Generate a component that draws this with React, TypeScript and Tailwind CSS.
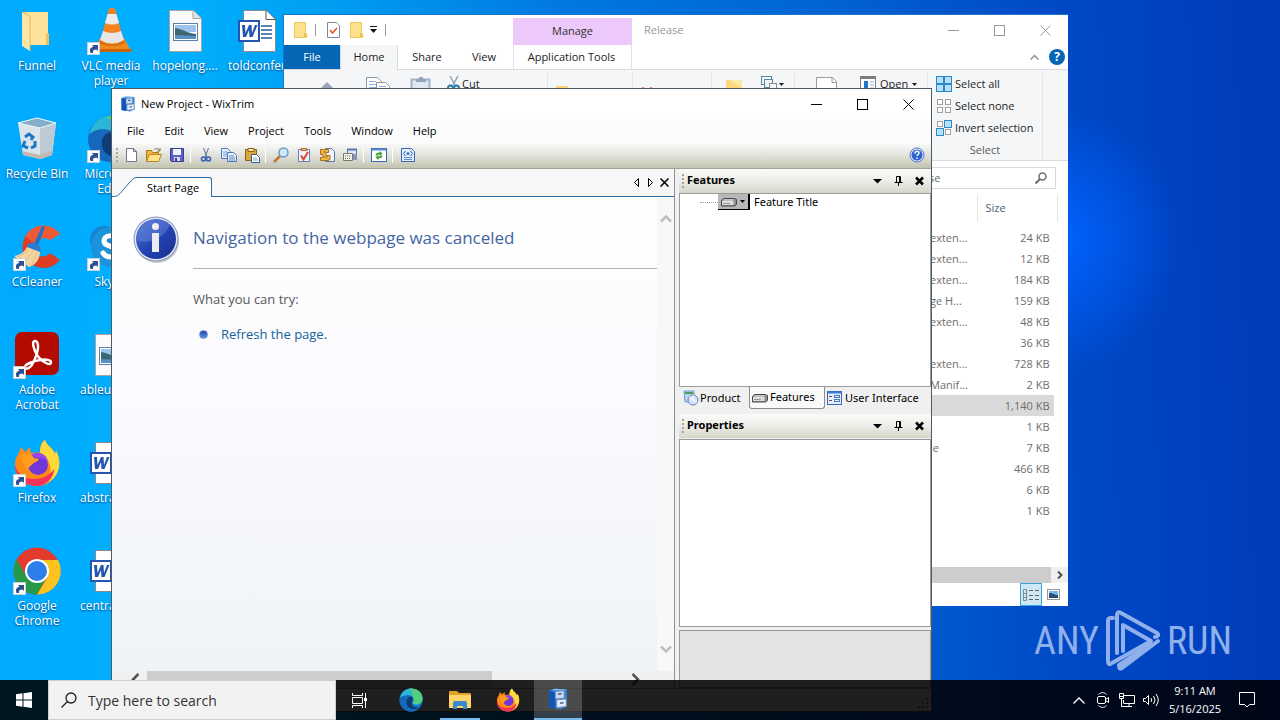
import type { ReactNode } from "react";

interface FileRow {
  type: string;
  size: string;
  selected?: boolean;
}

const files: FileRow[] = [
  { type: "exten...", size: "24 KB" },
  { type: "exten...", size: "12 KB" },
  { type: "exten...", size: "184 KB" },
  { type: "ge H...", size: "159 KB" },
  { type: "exten...", size: "48 KB" },
  { type: "", size: "36 KB" },
  { type: "exten...", size: "728 KB" },
  { type: "Manif...", size: "2 KB" },
  { type: "", size: "1,140 KB", selected: true },
  { type: "", size: "1 KB" },
  { type: "le", size: "7 KB" },
  { type: "", size: "466 KB" },
  { type: "", size: "6 KB" },
  { type: "", size: "1 KB" },
];

const menus = ["File", "Edit", "View", "Project", "Tools", "Window", "Help"];

/* ---------- desktop icons ---------- */

function Shortcut() {
  return (
    <g>
      <rect x="0.5" y="35.5" width="12" height="12" fill="#fff" stroke="#c8d0d8" />
      <path d="M3.500 46c-1.500-4 .5-6 3-6L5 38h6v6l-1.500-1.500C7 42.500 5.500 43.500 6 46z" fill="#2f4f8f" />
    </g>
  );
}

function FolderBig() {
  return (
    <svg className="size-12" viewBox="0 0 48 48">
      <path d="M9 5h26v21l1 1v11H13z" fill="#fbd97c" />
      <path d="M14 5h21v33H14z" fill="#fde299" />
      <path d="M33 26l3 1v11h-3z" fill="#f0c050" />
      <path d="M9 5l8 4v35l-8-5z" fill="#f9e6a8" />
      <path d="M9 5l8 4v35" fill="none" stroke="#e0bb55" />
    </svg>
  );
}

function Vlc() {
  return (
    <svg className="size-12" viewBox="0 0 48 48">
      <path d="M13 31h24l7 13H6z" fill="#f08a1d" />
      <path d="M5 42h40l-1 3H6z" fill="#c96306" />
      <ellipse cx="25" cy="35" rx="13" ry="4" fill="#d56c0a" />
      <path d="M22 2q3-3 6 0l9 32q-12 7-24 0z" fill="#f58220" />
      <path d="M20.500 7h9l2.500 9q-7 3-14 0z" fill="#ececec" />
      <path d="M16 24q9 4 18 0l3 9q-12 7-24 0z" fill="#e6e6e6" />
      <Shortcut />
    </svg>
  );
}

function ImageDoc() {
  return (
    <svg className="size-12" viewBox="0 0 48 48">
      <path d="M8.500 3.500h24l8 8v33h-32z" fill="#fafafa" stroke="#a5a5a5" />
      <path d="M32 3.500v8h8.500" fill="#e3e3e3" stroke="#a5a5a5" />
      <rect x="12.500" y="16.500" width="24" height="17" fill="#fff" stroke="#5c7fa8" />
      <path d="M14 18h21v7H14z" fill="#9cc3ea" />
      <path d="M14 21c7 1 12 5 21 6v5H14z" fill="#3c6674" />
      <path d="M14 28l21 1v3H14z" fill="#5b90c4" />
    </svg>
  );
}

function WordDoc() {
  return (
    <svg className="size-12" viewBox="0 0 48 48">
      <path d="M8.500 3.500h23l9 9v32h-32z" fill="#fff" stroke="#8a8a8a" />
      <path d="M31 3.500v9h9.500" fill="none" stroke="#555" />
      <path d="M26 19h11M26 23h11M26 27h11M26 31h11" stroke="#2b579a" strokeWidth="1.500" />
      <rect x="4" y="14" width="20" height="20" fill="#fff" stroke="#2456b0" strokeWidth="2" />
      <path d="M7 18h3l.5 8 3.500-8h2.500l.5 8 3-8h2.500l-5 12h-3l-.5-7-3 7h-3z" fill="#2456b0" />
    </svg>
  );
}

function RecycleBin() {
  return (
    <svg className="size-12" viewBox="0 0 48 48">
      <path d="M5 8l22 5 16-5-4 32-12 4-17-4z" fill="#dbe4ea" />
      <path d="M27 13l16-5-4 32-12 4z" fill="#bccad4" />
      <path d="M5 8l19-5 19 5-16 5z" fill="#86aecb" stroke="#f4f8fa" />
      <path d="M12 22l4-3 4 3-2 3M22 26l0 5-4 2M15 33l-5-2 2-5" fill="none" stroke="#1878c8" strokeWidth="3" />
      <path d="M9 36l18 4 12-4v4l-12 4-17-4z" fill="#c4b7b0" />
    </svg>
  );
}

function EdgeGlyph() {
  return (
    <>
      <circle cx="24" cy="24" r="23" fill="#1377cf" />
      <path d="M2 20C5 6 15 1 24 1c14 0 23 9 23 20 0 8-6 12-13 12-5 0-7-2-6-4 3-4 2-13-8-14C12 14 5 18 2 20z" fill="#2cb6d6" />
      <path d="M24 1c14 0 23 9 23 20 0 8-6 12-13 12-5 0-7-2-6-4 3-4 2-9-2-12 2-6 0-12-7-15z" fill="#51cf7e" />
      <path d="M2 20c6-7 18-7 24-3-9 0-12 7-11 14 2 10 12 15 22 12-5 4-10 4-14 4C9 46-1 34 2 20z" fill="#1668bb" />
      <path d="M26 17c-9 0-12 7-11 14 2 10 14 16 28 7-12 3-20-3-17-11 2-4 3-6 0-10z" fill="#0d3c76" />
    </>
  );
}

function EdgeBig() {
  return (
    <svg className="size-12" viewBox="0 0 48 48">
      <EdgeGlyph />
      <Shortcut />
    </svg>
  );
}

function CCleaner() {
  return (
    <svg className="size-12" viewBox="0 0 48 48">
      <path d="M47 11A21 21 0 1 0 47 37L37 30a10 10 0 1 1 0-13z" fill="#df3d22" />
      <path d="M47 11A21 21 0 0 0 12 13l10 8a10 10 0 0 1 15-4z" fill="#ee5a35" />
      <path d="M29 3l3 1-7 19-4-2z" fill="#2472c8" />
      <path d="M14 22q7-6 13 2l1 5-13-3z" fill="#2b7bd0" />
      <path d="M14 24l13 5c0 8-6 14-11 15L1 33c7-1 11-5 13-9z" fill="#f3d3a1" />
      <path d="M16 27L5 34M20 28l-9 12M24 30l-6 13" stroke="#e3bc84" />
      <Shortcut />
    </svg>
  );
}

function Skype() {
  return (
    <svg className="size-12" viewBox="0 0 48 48">
      <circle cx="17" cy="17" r="14" fill="#1583cf" />
      <circle cx="31" cy="31" r="14" fill="#1583cf" />
      <circle cx="24" cy="24" r="20" fill="#1b93dc" />
      <path d="M31 16c-4-5-14-4-14 2 0 7 14 4 14 11 0 6-11 7-15 1" fill="none" stroke="#fff" strokeWidth="5" strokeLinecap="round" />
      <Shortcut />
    </svg>
  );
}

function Acrobat() {
  return (
    <svg className="size-12" viewBox="0 0 48 48">
      <rect x="2" y="1" width="44" height="43" rx="7" fill="#b30b00" />
      <path
        d="M22 10c-3 0-2 5 0 10s7 10 11 12 5 1 5-1-5-3-11-2-15 4-15 7 5 2 8-4 5-12 5-16-1-6-3-6z"
        fill="none"
        stroke="#fff"
        strokeWidth="2.500"
      />
      <Shortcut />
    </svg>
  );
}

function FirefoxGlyph() {
  return (
    <>
      <path d="M8 8l4 5 5-5 1 6 9-1C27 7 29 3 32 1c2 6 8 8 10 14l1-3c5 8 4 18 0 24-5 8-12 11-19 11C11 47 2 38 2 26c0-5 1-8 3-10z" fill="#ff8a16" />
      <path d="M32 1c2 6 8 8 10 14l1-3c5 8 4 18 0 24-3 5-8 8-12 9 8-8 9-18 2-26-3-3-7-4-6-6 0-6 2-10 5-12z" fill="#ffd93a" />
      <path d="M2 26c3 10 9 14 19 14 8 0 15-3 20-10 0 9-8 17-17 17C11 47 2 38 2 26z" fill="#f5325b" />
      <circle cx="25" cy="26" r="10" fill="#7038d8" />
      <path d="M18 16c7-5 16-1 17 7-4-5-9-4-12-4z" fill="#9a45e8" />
      <path d="M9 16c5-3 9-1 12 3l5 1c-1 3-5 3-6 5-4 2-3 4-6 5-4-4-6-9-5-14z" fill="#ff9e1c" />
    </>
  );
}

function FirefoxBig() {
  return (
    <svg className="size-12" viewBox="0 0 48 48">
      <FirefoxGlyph />
      <Shortcut />
    </svg>
  );
}

function Chrome() {
  return (
    <svg className="size-12" viewBox="0 0 48 48">
      <circle cx="24" cy="24" r="23.500" fill="#e33b2e" />
      <path d="M3.500 12.500A23.500 23.500 0 0 0 24 47.500L34 30 24 24 14 30z" fill="#279847" />
      <path d="M45 13H24l10.500 17L24 47.500A23.500 23.500 0 0 0 45 13z" fill="#fcc31e" />
      <circle cx="24" cy="24" r="12" fill="#fff" />
      <circle cx="24" cy="24" r="10" fill="#2f7de9" />
      <Shortcut />
    </svg>
  );
}

function DesktopIcon({ icon, label, clipped }: { icon: ReactNode; label: string; clipped?: boolean }) {
  return (
    <button className="flex h-[108px] w-[74px] flex-col items-center pt-[7px] text-xs leading-[15px] text-white">
      {icon}
      <span
        className={
          clipped
            ? "mt-[3px] w-full pl-1.5 text-left whitespace-nowrap [text-shadow:0_1px_2px_#003c78]"
            : "mt-[3px] text-center [text-shadow:0_1px_2px_#003c78]"
        }
      >
        {label}
      </span>
    </button>
  );
}

function Desktop() {
  return (
    <div className="flex">
      <div>
        <DesktopIcon icon={<FolderBig />} label="Funnel" />
        <DesktopIcon icon={<RecycleBin />} label="Recycle Bin" />
        <DesktopIcon icon={<CCleaner />} label="CCleaner" />
        <DesktopIcon icon={<Acrobat />} label="Adobe Acrobat" />
        <DesktopIcon icon={<FirefoxBig />} label="Firefox" />
        <DesktopIcon icon={<Chrome />} label="Google Chrome" />
      </div>
      <div>
        <DesktopIcon icon={<Vlc />} label="VLC media player" />
        <DesktopIcon icon={<EdgeBig />} label="Microsoft Edge" />
        <DesktopIcon icon={<Skype />} label="Skype" />
        <DesktopIcon icon={<ImageDoc />} label="ableu" clipped />
        <DesktopIcon icon={<WordDoc />} label="abstra" clipped />
        <DesktopIcon icon={<WordDoc />} label="centra" clipped />
      </div>
      <DesktopIcon icon={<ImageDoc />} label="hopelong...." />
      <DesktopIcon icon={<WordDoc />} label="toldconfer" clipped />
    </div>
  );
}

/* ---------- shared window parts ---------- */

function WindowButtons() {
  return (
    <div className="ml-auto flex h-full">
      <button aria-label="Minimize" className="flex w-[46px] items-center justify-center">
        <svg className="size-[11px]" viewBox="0 0 11 11" fill="none" stroke="currentColor">
          <path d="M0 5.500h11" />
        </svg>
      </button>
      <button aria-label="Maximize" className="flex w-[46px] items-center justify-center">
        <svg className="size-[11px]" viewBox="0 0 11 11" fill="none" stroke="currentColor">
          <rect x="0.500" y="0.500" width="10" height="10" />
        </svg>
      </button>
      <button aria-label="Close" className="flex w-[46px] items-center justify-center">
        <svg className="size-[11px]" viewBox="0 0 11 11" fill="none" stroke="currentColor">
          <path d="M.5.5l10 10M10.500.5l-10 10" />
        </svg>
      </button>
    </div>
  );
}

function Caret() {
  return (
    <svg className="h-[3px] w-[5px]" viewBox="0 0 5 3" fill="currentColor">
      <path d="M0 0h5L2.500 3z" />
    </svg>
  );
}

function FolderSmall() {
  return (
    <svg className="size-4" viewBox="0 0 16 16">
      <path d="M2.500.5h11v10l1 1v4h-12z" fill="#fde08a" stroke="#ecc65c" />
      <path d="M12 11l2.500.5v4H12z" fill="#f3c553" />
    </svg>
  );
}

/* ---------- file explorer ---------- */

function SelectIcon({ on }: { on: boolean[] }) {
  const spots = [
    [0.5, 0.5],
    [8.5, 0.5],
    [0.5, 8.5],
    [8.5, 8.5],
  ];
  return (
    <svg className="size-4" viewBox="0 0 16 16">
      {spots.map(([x, y], i) =>
        on[i] ? (
          <rect key={i} x={x} y={y} width="7" height="7" fill="#b7e1fb" stroke="#2c89c8" />
        ) : (
          <rect key={i} x={x + 1} y={y + 1} width="5" height="5" fill="#fff" stroke="#a0a0a0" />
        )
      )}
    </svg>
  );
}

function Ribbon() {
  return (
    <div className="flex h-[92px] shrink-0 items-start border-y border-[#dadbdc] bg-[#f5f6f7] pt-[3px] text-[11px] leading-[22px] text-[#1e1e1e]">
      <div className="flex h-[87px] w-[264px] border-r border-[#e2e3e4] pl-[34px]">
        <svg className="mt-2 size-5" viewBox="0 0 20 20">
          <path d="M9 1L1 9h5v9h6V9h5z" fill="#9aa5bd" />
        </svg>
        <svg className="mt-1 ml-7 h-7 w-7" viewBox="0 0 28 28" fill="#fff" stroke="#8b95a5">
          <path d="M.5.5h11l4 4v17H.5z" />
          <path d="M3 4.500h7M3 7.500h8M3 10.500h8" stroke="#8fb0dc" />
          <path d="M10.500 5.500h9l4 4v15h-13z" />
          <path d="M13 9.500h7" stroke="#8fb0dc" />
        </svg>
        <svg className="mt-1 ml-4 h-7 w-6" viewBox="0 0 24 28">
          <rect x="1.500" y="2.500" width="18" height="24" fill="#dfe7f1" stroke="#a3b3ca" strokeWidth="2" />
          <path d="M6 5V2h3V0h4v2h3v3z" fill="#93a5bd" />
        </svg>
        <button className="ml-3 flex h-[22px] items-center">
          <svg className="h-4 w-4" viewBox="0 0 16 16" fill="none">
            <path d="M4 0l5 9M12 0L7 9" stroke="#98a2ae" strokeWidth="1.500" />
            <circle cx="4.500" cy="12" r="2.500" stroke="#2b7ba8" strokeWidth="2" />
            <circle cx="10.500" cy="12" r="2.500" stroke="#2b7ba8" strokeWidth="2" />
          </svg>
          Cut
        </button>
      </div>
      <div className="flex h-[87px] w-[85px] border-r border-[#e2e3e4] pt-2 pl-2">
        <span className="flex items-center gap-1 self-start whitespace-nowrap">
          <svg className="size-3" viewBox="0 0 12 12">
            <path d="M0 0h12v12H0z" fill="#fbd566" />
          </svg>
          Move to
        </span>
      </div>
      <div className="flex h-[87px] flex-1 border-r border-[#e2e3e4] pt-2 pl-2">
        <span className="flex items-center gap-1 self-start whitespace-nowrap">
          <svg className="h-3 w-3" viewBox="0 0 12 12" stroke="#b3202c" strokeWidth="3">
            <path d="M1 2l10 9M11 2L1 11" />
          </svg>
          Delete
        </span>
      </div>
      <div className="flex h-[87px] w-[83px] border-r border-[#e2e3e4] pl-[14px]">
        <svg className="mt-[7px] h-7 w-5" viewBox="0 0 20 28">
          <path d="M0 0h16v20H0z" fill="#fbd97c" />
          <path d="M4 0h12v8z" fill="#fbe9a8" />
        </svg>
        <button aria-label="New item" className="ml-[15px] flex h-[22px] items-center gap-[2px]">
          <svg className="size-4" viewBox="0 0 16 16" fill="#f4f8fa" stroke="#58889d">
            <rect x="0.500" y="0.500" width="10" height="8" />
            <rect x="3.500" y="3.500" width="8" height="8" />
            <rect x="8.500" y="7.500" width="7" height="7" stroke="#8a8a8a" />
          </svg>
          <Caret />
        </button>
      </div>
      <div className="flex h-[87px] w-[133px] border-r border-[#e2e3e4] pl-[21px]">
        <svg className="mt-1 h-7 w-6" viewBox="0 0 24 28">
          <path d="M.5.5h16l4 4v22H.5z" fill="#fff" stroke="#9a9a9a" />
          <path d="M16 .5v5h5" fill="none" stroke="#9a9a9a" />
        </svg>
        <button className="ml-5 flex h-[22px] items-center gap-1">
          <svg className="size-4" viewBox="0 0 16 16">
            <rect x="0.500" y="0.500" width="15" height="14" fill="#fff" stroke="#7d7d7d" />
            <path d="M1 2h14" stroke="#7d7d7d" strokeWidth="2" />
            <path d="M4 5h4v8H4z" fill="#1e78c8" />
            <path d="M10 6h4M10 9h4M10 12h4" stroke="#8db9e0" />
          </svg>
          Open
          <Caret />
        </button>
      </div>
      <div className="flex h-[87px] w-[115px] flex-col border-r border-[#e2e3e4] pl-2">
        <button className="flex items-center gap-[3px] whitespace-nowrap">
          <SelectIcon on={[true, true, true, true]} />
          Select all
        </button>
        <button className="flex items-center gap-[3px] whitespace-nowrap">
          <SelectIcon on={[false, false, false, false]} />
          Select none
        </button>
        <button className="flex items-center gap-[3px] whitespace-nowrap">
          <SelectIcon on={[false, true, true, false]} />
          Invert selection
        </button>
        <span className="pr-2 text-center text-[#5a5a5a]">Select</span>
      </div>
      <div className="w-[25px]" />
    </div>
  );
}

function Explorer() {
  return (
    <section
      aria-label="Release"
      className="absolute top-[14px] right-[212px] bottom-[114px] left-[283px] flex flex-col border-t border-l border-[#1a74c4] bg-white text-[11px]"
    >
      <div className="flex h-[30px] shrink-0 items-center pl-2 text-[#999]">
        <FolderSmall />
        <span className="mr-2 ml-[7px] h-3 w-px bg-[#999]" />
        <svg className="ml-[3px] h-4 w-[13px]" viewBox="0 0 13 16">
          <path d="M.5.5h9l3 3v12H.5z" fill="#fff" stroke="#7a8a9a" />
          <path d="M3 8l2.500 3L10 6" fill="none" stroke="#e0532f" strokeWidth="1.500" />
        </svg>
        <span className="ml-2">
          <FolderSmall />
        </span>
        <svg className="ml-1.5 h-2 w-[7px]" viewBox="0 0 7 8">
          <path d="M0 0h7v1H0zM0 3h7L3.500 7z" fill="#111" />
        </svg>
        <span className="ml-2 h-3 w-px bg-[#999]" />
        <div className="ml-[127px] flex h-[27px] w-[119px] items-center justify-center self-end bg-[#ecc8fb] text-[#333]">
          Manage
        </div>
        <span className="ml-3">Release</span>
        <WindowButtons />
      </div>
      <div className="flex h-6 shrink-0 items-stretch text-[#222]">
        <button className="w-14 bg-[#0566b6] text-white">File</button>
        <button className="relative z-10 -mb-px w-[58px] border-x border-[#dadbdc] bg-[#f5f6f7] pb-px">Home</button>
        <button className="w-[58px]">Share</button>
        <button className="w-[56px]">View</button>
        <button className="ml-px w-[119px] border-x border-[#ecd5f5] pr-0.5">Application Tools</button>
        <div className="ml-auto flex items-center gap-2.5 pr-[3px]">
          <svg className="h-[6px] w-[9px]" viewBox="0 0 9 6" fill="none" stroke="#8f8f8f" strokeWidth="1.500">
            <path d="M.5 5.500l4-4 4 4" />
          </svg>
          <button aria-label="Help" className="size-4 rounded-full bg-[#0566b6] text-xs leading-4 font-bold text-white">
            ?
          </button>
        </div>
      </div>
      <Ribbon />
      <div className="flex shrink-0 justify-end pt-[6px] pr-3">
        <label className="flex h-[22px] w-[140px] items-center border border-[#d9d9d9] pr-2">
          <input aria-label="Search Release" defaultValue="se" className="w-full pl-3 text-[11px] text-[#6d6d6d] outline-none" />
          <svg className="size-3 shrink-0" viewBox="0 0 12 12" fill="none" stroke="#6d6d6d" strokeWidth="1.500">
            <circle cx="7.500" cy="4.500" r="3.500" />
            <path d="M5 7L.5 11.500" strokeWidth="2" />
          </svg>
        </label>
      </div>
      <div className="flex flex-1 justify-end pt-1.5 pr-[10px]">
        <table className="w-[128px] table-fixed self-start text-[#6d6d6d]">
          <thead>
            <tr className="h-[27px] text-left text-[#4c607a]">
              <th className="w-[47px] border-r border-[#e5e5e5]" />
              <th className="pl-2 font-normal">Size</th>
              <th className="w-1 border-r border-[#e5e5e5]" />
            </tr>
          </thead>
          <tbody className="before:block before:h-[5px] before:content-['']">
            {files.map((f, i) => (
              <tr key={i} className="h-[21px]">
                <td className={f.selected ? "bg-[#d9d9d9] p-0" : "p-0 leading-5 whitespace-nowrap"}>{f.type}</td>
                <td
                  className={
                    f.selected
                      ? "bg-[#d9d9d9] p-0 pr-1 text-right leading-5 whitespace-nowrap"
                      : "p-0 pr-1 text-right leading-5 whitespace-nowrap"
                  }
                >
                  {f.size}
                </td>
                <td />
              </tr>
            ))}
          </tbody>
        </table>
      </div>
      <div className="flex h-4 shrink-0 bg-[#f0f0f0]">
        <div className="flex-1 bg-[#cdcdcd]" />
        <button aria-label="Scroll right" className="flex w-[17px] items-center justify-center">
          <svg className="h-2 w-[6px]" viewBox="0 0 6 8" fill="none" stroke="#505050" strokeWidth="2">
            <path d="M1 .5L4.500 4 1 7.500" />
          </svg>
        </button>
      </div>
      <div className="flex h-[23px] shrink-0 justify-end pr-1">
        <button aria-label="Details view" className="flex w-[22px] items-center justify-center border border-[#3aa5d8] bg-[#cce8f6]">
          <svg className="h-3 w-4" viewBox="0 0 16 12" fill="none" stroke="#888">
            <path d="M.5.5h3v11h-3zM.5 4.500h3M.5 8.500h3" />
            <path d="M6 1.500h4M12 1.500h4M6 6.500h4M12 6.500h4M6 10.500h4M12 10.500h4" stroke="#666" />
          </svg>
        </button>
        <button aria-label="Large icons" className="flex w-[22px] items-center justify-center">
          <svg className="h-[11px] w-[13px]" viewBox="0 0 13 11">
            <rect x="0.500" y="0.500" width="12" height="10" fill="#fff" stroke="#999" />
            <path d="M2 2h9v4H2z" fill="#7db3e6" />
            <path d="M2 4c4 0 5 2 9 2v3H2z" fill="#284c72" />
          </svg>
        </button>
      </div>
    </section>
  );
}

/* ---------- WixTrim window ---------- */

function AppGlyph() {
  return (
    <>
      <path d="M1.500 2l4-1.500 9 .5v12.500L10 15.500 1.500 14z" fill="#2f86e0" />
      <path d="M1.500 2L6 3v12l-4.500-1z" fill="#0f55b4" />
      <path d="M3 1.500l3-1 8.500.5-3 1z" fill="#7ec0f8" />
      <path d="M6 2.500l6.500-.5v5.500L6 8z" fill="#c9d8ee" stroke="#5a79a8" strokeWidth="0.500" />
      <path d="M7 8.500l7-.5v5.500l-7 .8z" fill="#e3eaf6" stroke="#5a79a8" strokeWidth="0.500" />
      <path d="M8 4.500l2.500-.3M9.500 11l2.500-.3" stroke="#33507c" />
    </>
  );
}

function Tool({ label, children }: { label: string; children: ReactNode }) {
  return (
    <button aria-label={label} className="flex h-[22px] w-[23px] items-center justify-center">
      <svg className="size-4" viewBox="0 0 16 16" fill="none">
        {children}
      </svg>
    </button>
  );
}

function Divider() {
  return <span className="mr-[3px] ml-[2px] h-4 w-px shrink-0 bg-white" />;
}

function Grip() {
  return (
    <svg className="h-[14px] w-[2px] shrink-0" viewBox="0 0 2 14">
      <path d="M1 0v14" stroke="#a4a4a4" strokeWidth="2" strokeDasharray="2 2" />
    </svg>
  );
}

function Toolbar() {
  return (
    <div className="flex h-[26px] shrink-0 items-center border-b border-[#a3a295] bg-linear-to-b from-[#fafafa] via-[#e2e2dc] to-[#c3c3b0] pr-[3px] pb-[2px] pl-1">
      <Grip />
      <span className="w-px" />
      <Tool label="New">
        <path d="M3.500 1.500h7l3 3v10h-10z" fill="#fff" stroke="#6a7890" />
        <path d="M10.500 1.500v3h3" stroke="#6a7890" />
      </Tool>
      <Tool label="Open">
        <path d="M.5 3.500h5l1 2h6v3l-3 6h-9z" fill="#f2b640" stroke="#a8761a" />
        <path d="M.5 14.500l3-7h12l-3 7z" fill="#ffe28a" stroke="#b8831e" />
        <path d="M8 3c2-2 4-2 5 0M14 1v3h-3" stroke="#806a40" />
      </Tool>
      <Tool label="Save">
        <path d="M1.500 1.500h13v13h-12l-1-1z" fill="#5c62c4" stroke="#3a3f96" />
        <path d="M4 2h8v6H4z" fill="#f0f2ff" />
        <path d="M5 10h6v4H5z" fill="#d8dce8" />
        <path d="M6 11h2v3H6z" fill="#3a3f96" />
      </Tool>
      <Divider />
      <Tool label="Cut">
        <path d="M5.500 1l3.500 9M10.500 1L7 10" stroke="#5c7494" />
        <circle cx="5.500" cy="12" r="2" stroke="#2d5fb8" strokeWidth="1.500" />
        <circle cx="10.500" cy="12" r="2" stroke="#2d5fb8" strokeWidth="1.500" />
      </Tool>
      <Tool label="Copy">
        <path d="M.5 1.500h6l3 3v7h-9z" fill="#eaf2ff" stroke="#4d78b8" />
        <path d="M2 5h5M2 7h5M2 9h5" stroke="#7ba2d8" />
        <path d="M6.500 5.500h6l3 3v6h-9z" fill="#eaf2ff" stroke="#4d78b8" />
        <path d="M8 9h5M8 11h6M8 13h6" stroke="#5584c8" />
      </Tool>
      <Tool label="Paste">
        <path d="M1.500 2.500h11v11h-11z" fill="#dca83c" stroke="#8a6216" />
        <path d="M4 4.500v-3h6v3z" fill="#fbe6a0" stroke="#8a6216" />
        <path d="M7.500 7.500h5l3 3v5h-8z" fill="#fff" stroke="#3c5a8c" />
        <path d="M9 11h4M9 13h5" stroke="#7ba2d8" />
      </Tool>
      <Divider />
      <Tool label="Find">
        <circle cx="10.500" cy="5.500" r="4.500" fill="#cfe8f8" stroke="#6d9cc8" strokeWidth="1.500" />
        <path d="M7 9l-6 6" stroke="#b8783c" strokeWidth="2.500" />
      </Tool>
      <Tool label="Validate">
        <path d="M2.500 2.500h11v12h-11z" fill="#eef2fc" stroke="#6a7fb8" />
        <path d="M5 3.500v-2h6v2z" fill="#f0b080" stroke="#b07030" />
        <path d="M5 8.500l2.500 4L12 5" stroke="#d84a30" strokeWidth="2" />
      </Tool>
      <Tool label="Script">
        <path d="M6.500 1.500h6l3 3v10h-9z" fill="#eef4ff" stroke="#5877a8" />
        <path d="M1.500 2.500h8v3H7v3h4v4l-2 1H1.500v-3H4v-3H1.500z" fill="#f0b848" stroke="#a87018" />
        <path d="M4 5h3M5 10h4" stroke="#a87018" />
      </Tool>
      <Tool label="Dialogs">
        <path d="M5.500 2.500h9v7h-9z" fill="#dce6fa" stroke="#5877b8" />
        <path d="M5 2.500h10" stroke="#5877b8" strokeWidth="2" />
        <path d="M1.500 6.500h9v7h-9z" fill="#f4f4ea" stroke="#77776a" />
        <path d="M3 9h6M3 11.500h6" stroke="#666" strokeDasharray="1 1" />
        <path d="M11 7h4v6h-4z" fill="#8b92b4" />
      </Tool>
      <Divider />
      <Tool label="Refresh">
        <rect x="0.500" y="1.500" width="15" height="13" fill="#fff" stroke="#3868b0" />
        <path d="M1 2.500h14" stroke="#5888d0" strokeWidth="2" />
        <path d="M4.500 8.500c0-2 1.500-3 4-3V4l3 2.500-3 2.500V7.500c-1.500 0-2 .5-2 1zM11.500 8.500c0 2-1.500 3-4 3V13l-3-2.500 3-2.500v1.500c1.500 0 2-.5 2-1z" fill="#3ca030" />
      </Tool>
      <Divider />
      <Tool label="Code">
        <path d="M1.500 1.500h10l3 3v10h-13z" fill="#e4eefc" stroke="#3868b0" />
        <path d="M5.500 4l-2 2.500 2 2.500M10.500 4l2 2.500-2 2.500" stroke="#2858a8" />
        <path d="M4 10.500h8M4 12.500h8" stroke="#5f88c8" />
        <circle cx="8" cy="6.500" r="1.500" fill="#2878c8" />
      </Tool>
      <span className="ml-auto" />
      <Tool label="Help">
        <circle cx="8" cy="8" r="7" fill="#e4ecfa" stroke="#5078c8" />
        <circle cx="8" cy="8" r="5.500" fill="#2d62cc" />
        <path d="M6 6.500c0-3 4-3 4-.5 0 1.500-2 1.500-2 3M8 10.500v1.500" stroke="#fff" strokeWidth="1.500" />
      </Tool>
    </div>
  );
}

function StartPage() {
  return (
    <div className="flex min-w-0 flex-1 flex-col border-r border-[#8f8f8f]">
      <div className="flex h-7 shrink-0 items-end bg-[#f7f7f7]">
        <svg className="h-5 w-6 shrink-0" viewBox="0 0 24 20" fill="none">
          <path d="M0 20C7 20 7 17 18 5q4-4 6-4.500V20z" fill="#fff" />
          <path d="M0 19.500h2C7 19.500 8 16 18 5q4-4.500 6-4.500" stroke="#2a6ca8" />
        </svg>
        <button className="h-5 w-[76px] rounded-tr-[3px] border-t border-r border-[#2a6ca8] bg-white pr-px text-center text-[11px] leading-[18px] whitespace-nowrap">
          Start Page
        </button>
        <div className="flex h-7 flex-1 items-center justify-end border-b border-[#2a6ca8] pr-[3px]">
          <button aria-label="Previous tab" className="flex w-[15px] justify-center">
            <svg className="h-[9px] w-[6px]" viewBox="0 0 6 9" fill="none" stroke="#000">
              <path d="M5.500.5v8l-4-4z" />
            </svg>
          </button>
          <button aria-label="Next tab" className="flex w-[15px] justify-center">
            <svg className="h-[9px] w-[6px]" viewBox="0 0 6 9" fill="none" stroke="#000">
              <path d="M.5.5v8l4-4z" />
            </svg>
          </button>
          <button aria-label="Close tab" className="flex w-[13px] justify-center">
            <svg className="size-[9px]" viewBox="0 0 9 9" stroke="#000" strokeWidth="1.500">
              <path d="M.5.5l8 8M8.500.5l-8 8" />
            </svg>
          </button>
        </div>
      </div>
      <div className="flex min-h-0 flex-1">
        <div className="flex min-w-0 flex-1 items-start bg-linear-to-b from-white via-[#fafaff] via-45% to-[#eff3f7] pt-[19px] pl-[21px] text-[13px]">
          <svg className="size-12 shrink-0" viewBox="0 0 48 48">
            <defs>
              <linearGradient id="info" x1="0" y1="0" x2="1" y2="1">
                <stop offset="0" stopColor="#5878d8" />
                <stop offset="0.500" stopColor="#2344b4" />
                <stop offset="1" stopColor="#1c2f8e" />
              </linearGradient>
            </defs>
            <circle cx="24" cy="25" r="22" fill="#c2c6d0" />
            <circle cx="23" cy="23" r="22.500" fill="#8a94b4" />
            <circle cx="23" cy="23" r="21.500" fill="#dfe6f8" />
            <circle cx="23" cy="23" r="20" fill="url(#info)" />
            <path d="M3.500 24C14 30 32 22 37 9A20 20 0 0 0 3.500 24z" fill="#6d8be0" opacity="0.450" />
            <circle cx="22.500" cy="10.500" r="3.500" fill="#f0f0f0" />
            <path d="M19 17h7v19h-7z" fill="#ececf0" />
          </svg>
          <div className="min-w-0 flex-1 pl-3">
            <h1 className="h-[53px] border-b border-[#b0b0b0] pt-2 text-[17px] leading-7 whitespace-nowrap text-[#4465a2]">
              Navigation to the webpage was canceled
            </h1>
            <p className="mt-5 leading-5 text-[#575757]">What you can try:</p>
            <ul className="mt-[15px]">
              <li className="flex items-center leading-5">
                <span className="mx-[6px] size-[9px] rounded-full border border-[#6d8ad0] bg-linear-to-b from-[#1f3fae] to-[#5c9be8]" />
                <a href="#refresh" className="ml-[7px] text-[#136299]">
                  Refresh the page.
                </a>
              </li>
            </ul>
          </div>
        </div>
        <div className="flex w-[17px] shrink-0 flex-col items-center justify-between bg-[#f8f8f8] py-[17px]">
          <svg className="h-[9px] w-3" viewBox="0 0 12 9" fill="none" stroke="#bfbfbf" strokeWidth="2.500">
            <path d="M1 7.500l5-5 5 5" />
          </svg>
          <svg className="h-[9px] w-3" viewBox="0 0 12 9" fill="none" stroke="#bfbfbf" strokeWidth="2.500">
            <path d="M1 1.500l5 5 5-5" />
          </svg>
        </div>
      </div>
      <div className="flex h-[17px] shrink-0 items-stretch bg-[#f0f0f0] pr-[34px]">
        <svg className="mr-2 ml-[19px] h-4 w-2 shrink-0" viewBox="0 0 8 16" fill="none" stroke="#505050" strokeWidth="2.500">
          <path d="M7.500 3L2 8.500 7.500 14" />
        </svg>
        <div className="w-[345px] bg-[#cdcdcd]" />
        <svg className="ml-auto h-4 w-2 shrink-0" viewBox="0 0 8 16" fill="none" stroke="#505050" strokeWidth="2.500">
          <path d="M.5 3L6 8.500.5 14" />
        </svg>
      </div>
    </div>
  );
}

function PaneHeader({ title }: { title: string }) {
  return (
    <div className="flex h-6 shrink-0 items-center bg-linear-to-b from-[#fbfbfb] via-[#ecece8] to-[#d6d6c8] pr-[7px] pb-px pl-[3px] text-black">
      <Grip />
      <h2 className="ml-[3px] text-[11px] font-bold">{title}</h2>
      <div className="ml-auto flex items-center gap-3 pt-px">
        <svg className="h-[5px] w-[9px]" viewBox="0 0 9 5">
          <path d="M0 0h9L4.500 4.500z" />
        </svg>
        <svg className="h-[10px] w-[9px]" viewBox="0 0 9 10" fill="none" stroke="#000">
          <path d="M2.500 6V.5h4V6M.5 6.500h8M4.500 7v3M5.500 1v5" />
        </svg>
        <svg className="h-[10px] w-[9px]" viewBox="0 0 9 10" stroke="#000" strokeWidth="2.500">
          <path d="M1 1.500l7 7M8 1.500l-7 7" />
        </svg>
      </div>
    </div>
  );
}

function Drive() {
  return (
    <svg className="h-[10px] w-4" viewBox="0 0 16 10">
      <path d="M2.500 1.500h11l2 1v5l-2 1.500H.5V3.500z" fill="#909090" stroke="#484848" />
      <path d="M1 4h11.500v4H1z" fill="#dedede" />
      <path d="M3 2.500h10l-1 1H2z" fill="#f4f4f4" />
      <path d="M2 6.500h7" stroke="#9a9a9a" />
    </svg>
  );
}

function SidePanes() {
  return (
    <aside className="flex w-[252px] shrink-0 flex-col font-['Noto_Sans','Open_Sans',sans-serif] text-[11px]">
      <PaneHeader title="Features" />
      <div className="h-[194px] shrink-0 border border-[#9a9a9a] bg-white pl-5">
        <div className="flex h-4 items-center">
          <span className="w-[18px] border-t border-dotted border-[#a0a0a0]" />
          <button aria-label="Feature options" className="flex h-4 w-8 items-center justify-center gap-[3px] border-r-2 border-b border-black bg-[#b8b8b8]">
            <Drive />
            <Caret />
          </button>
          <span className="ml-1">Feature Title</span>
        </div>
      </div>
      <div className="flex h-6 shrink-0 items-start" role="tablist">
        <button role="tab" className="flex h-[22px] w-[70px] items-center gap-px pl-1">
          <svg className="size-4 shrink-0" viewBox="0 0 16 16">
            <path d="M1 1h10v11H2z" fill="#b8d4f4" stroke="#6c98d0" />
            <path d="M2 3h8" stroke="#4ca04c" strokeWidth="2" />
            <circle cx="10" cy="10" r="5" fill="#d4e2fa" stroke="#6c80c0" />
            <path d="M6 7l4 3V5M10 10l4 2" stroke="#fff" fill="none" />
          </svg>
          Product
        </button>
        <button role="tab" aria-selected className="flex h-[22px] w-[76px] items-center gap-[2px] rounded-b-[3px] border border-t-0 border-[#8c8c8c] bg-[#fafafa] pl-[2px]">
          <Drive />
          Features
        </button>
        <button role="tab" className="flex h-[22px] items-center gap-[3px] pl-[2px] whitespace-nowrap">
          <svg className="h-[14px] w-[15px] shrink-0" viewBox="0 0 15 14" fill="none">
            <rect x="0.500" y="0.500" width="14" height="13" fill="#e4effc" stroke="#3868c0" />
            <path d="M1 1.500h13" stroke="#3c78d8" strokeWidth="2" />
            <path d="M2 5.500h3M2 9.500h3" stroke="#555" />
            <rect x="7.500" y="4.500" width="5" height="2" stroke="#4878b8" />
            <rect x="7.500" y="8.500" width="5" height="2" stroke="#4878b8" />
          </svg>
          User Interface
        </button>
      </div>
      <div className="mt-[3px] flex min-h-0 flex-1 flex-col">
        <PaneHeader title="Properties" />
        <div className="mt-px min-h-0 flex-1 border border-[#9a9a9a] bg-white" />
        <div className="mt-[3px] h-[58px] shrink-0 border border-[#9a9a9a] bg-[#e3e3e3]" />
      </div>
    </aside>
  );
}

function WixTrim() {
  return (
    <section
      aria-label="New Project - WixTrim"
      className="absolute top-[88px] right-[348px] bottom-2 left-[111px] flex flex-col border border-[#4c5a66] bg-[#f0f0f0] text-black"
    >
      <div className="flex h-[30px] shrink-0 items-center bg-white pl-2 text-[11px]">
        <svg className="size-4" viewBox="0 0 16 16">
          <AppGlyph />
        </svg>
        <span className="ml-[5px]">New Project - WixTrim</span>
        <WindowButtons />
      </div>
      <nav className="flex h-6 shrink-0 items-center bg-[#fcfcfc] pl-[5px] text-[11px]">
        {menus.map((m) => (
          <button key={m} className="px-[10px]">
            {m}
          </button>
        ))}
      </nav>
      <Toolbar />
      <div className="flex min-h-0 flex-1 gap-1">
        <StartPage />
        <SidePanes />
      </div>
      <div className="flex h-[23px] shrink-0 items-end justify-end border-t border-[#9a9a9a] p-[2px]">
        <svg className="size-3" viewBox="0 0 12 12" fill="#8c8c8c">
          <path d="M9 1h2v2H9zM5 5h2v2H5zM9 5h2v2H9zM1 9h2v2H1zM5 9h2v2H5zM9 9h2v2H9z" />
        </svg>
      </div>
    </section>
  );
}

/* ---------- watermark and taskbar ---------- */

function Watermark() {
  return (
    <div className="absolute right-12 bottom-[46px] flex h-[66px] items-center gap-[6px] font-['Liberation_Sans_Narrow','Roboto_Condensed','Roboto',sans-serif] text-[38px] leading-none text-[#8fb0ea]">
      <span>ANY</span>
      <svg className="h-[62px] w-14" viewBox="0 0 56 62" fill="none" stroke="currentColor" strokeWidth="4" strokeLinejoin="round" strokeLinecap="round">
        <path d="M8 8H6Q3 8 3 11v40q0 5 4 2l39-22L18 15v26" />
        <path d="M12 43V5q0-4 4-2l36 20q3 3-2 4M53 31L17 58q-3 2-3-3l32-21" />
      </svg>
      <span>RUN</span>
    </div>
  );
}

function Taskbar() {
  return (
    <footer className="absolute inset-x-0 bottom-0 flex h-10 items-stretch bg-black/87 text-white">
      <button aria-label="Start" className="flex w-12 items-center justify-center">
        <svg className="size-4" viewBox="0 0 16 16" fill="#fff">
          <path d="M0 2.200l6.500-.9v6.200H0zM7.500 1.200L16 0v7.500H7.500zM0 8.500h6.500v6.200L0 13.800zM7.500 8.500H16V16l-8.500-1.200z" />
        </svg>
      </button>
      <label className="flex w-72 items-center border border-[#cfcfcf] bg-[#f2f2f2] pl-3">
        <svg className="size-4 shrink-0" viewBox="0 0 16 16" fill="none" stroke="#222" strokeWidth="1.300">
          <circle cx="10" cy="6" r="5" />
          <path d="M6.500 9.500l-6 6" />
        </svg>
        <input
          aria-label="Search"
          placeholder="Type here to search"
          className="ml-[11px] w-full bg-transparent pt-0.5 text-sm outline-none placeholder:text-[#333]"
        />
      </label>
      <button aria-label="Task view" className="flex w-12 items-center justify-center">
        <svg className="h-[15px] w-4" viewBox="0 0 16 15" fill="none" stroke="#fff">
          <path d="M.5 0v2.500h10V0M.5 15v-2.500h10V15M.5 4.500h10v6H.5zM13.500 0v15" />
          <path d="M12 5h3v3h-3z" fill="#fff" stroke="none" />
        </svg>
      </button>
      <button aria-label="Microsoft Edge" className="flex w-[54px] items-center justify-center">
        <svg className="size-6" viewBox="0 0 48 48">
          <EdgeGlyph />
        </svg>
      </button>
      <button aria-label="File Explorer" className="mx-[2px] flex w-10 items-center justify-center border-b-2 border-[#76b9ed] pt-[2px]">
        <svg className="h-[19px] w-[22px]" viewBox="0 0 22 19">
          <path d="M0 1q0-1 1-1h7l2 2h11q1 0 1 1v14H0z" fill="#e0a126" />
          <path d="M0 4h22v13H0z" fill="#fdd669" />
          <path d="M4 18v-6q0-2 2-2h10q2 0 2 2v6h-4v-3H8v3z" fill="#3a8bcb" />
        </svg>
      </button>
      <button aria-label="Firefox" className="flex w-[52px] items-center justify-center">
        <svg className="size-6" viewBox="0 0 48 48">
          <FirefoxGlyph />
        </svg>
      </button>
      <button aria-label="WixTrim" className="flex w-12 items-center justify-center border-b-2 border-[#76b9ed] bg-white/20">
        <svg className="size-[22px]" viewBox="0 0 16 16">
          <AppGlyph />
        </svg>
      </button>
      <div className="ml-auto flex items-center">
        <svg className="h-[7px] w-3" viewBox="0 0 12 7" fill="none" stroke="#fff" strokeWidth="1.300">
          <path d="M.5 6.500L6 1l5.500 5.500" />
        </svg>
        <svg className="ml-3 h-4 w-3" viewBox="0 0 12 16" fill="none" stroke="#fff">
          <rect x="0.500" y="4.500" width="8" height="7" rx="1.500" />
          <path d="M8.500 7.500l3-2v5l-3-2M1.500 2.500c2-2.500 6-2.500 8 0M1.500 13.500c2 2.500 6 2.500 8 0" />
        </svg>
        <svg className="ml-[10px] h-[14px] w-4" viewBox="0 0 16 14" fill="none" stroke="#fff">
          <path d="M5 2.500h10.500v8H4.500V7M10 11v2.500M6 13.500h7M2.500 6v7.500H6M.5.500h4v5h-4zM1 3.500h3" />
        </svg>
        <svg className="ml-2 h-[14px] w-4" viewBox="0 0 16 14" fill="none" stroke="#fff">
          <path d="M.5 5.500h2l3-3v9l-3-3h-2zM8 5q1.500 2 0 4M10.500 3q3 4 0 8M13 1q4.500 6 0 12" />
        </svg>
        <time className="ml-2 w-[56px] text-center text-[11px] leading-[18px] whitespace-nowrap">
          9:11 AM
          <br />
          5/16/2025
        </time>
        <svg className="mr-[25px] ml-4 h-[17px] w-4" viewBox="0 0 16 17" fill="none" stroke="#fff">
          <path d="M.5.5h15v12h-5L8 15l-2.500-2.500h-5z" />
        </svg>
      </div>
    </footer>
  );
}

export default function App() {
  return (
    <main className="relative h-screen overflow-hidden bg-[radial-gradient(ellipse_120px_130px_at_1060px_240px,#0062ff_0%,transparent_100%),linear-gradient(88deg,#00aaff_0%,#00b0ff_15%,#00a0f4_26%,#0078e0_45%,#0064d4_65%,#004cc8_80%,#0044c2_88%,#003ab8_100%)] font-['Open_Sans','Noto_Sans',sans-serif]">
      <Desktop />
      <Explorer />
      <WixTrim />
      <Watermark />
      <Taskbar />
    </main>
  );
}
